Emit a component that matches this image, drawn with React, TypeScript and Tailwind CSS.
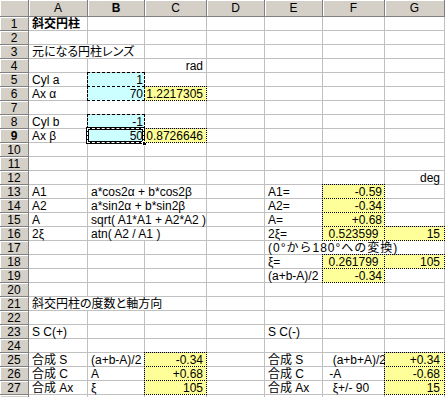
import React from 'react';

type Cell = {
  c: number;
  t: string;
  a?: 'r' | 'c';
  f?: 'y' | 'b';
  s?: number;
  bold?: boolean;
  sel?: boolean;
  wide?: boolean;
};

const COLS = ['A', 'B', 'C', 'D', 'E', 'F', 'G'];

const rows: Record<number, Cell[]> = {
  1: [{ c: 0, t: '斜交円柱', bold: true }],
  3: [{ c: 0, t: '元になる円柱レンズ', s: 2 }],
  4: [{ c: 2, t: 'rad', a: 'r' }],
  5: [{ c: 0, t: 'Cyl a' }, { c: 1, t: '1', a: 'r', f: 'b' }],
  6: [
    { c: 0, t: 'Ax α' },
    { c: 1, t: '70', a: 'r', f: 'b' },
    { c: 2, t: '1.2217305', a: 'r', f: 'y' },
  ],
  8: [{ c: 0, t: 'Cyl b' }, { c: 1, t: '-1', a: 'r', f: 'b' }],
  9: [
    { c: 0, t: 'Ax β' },
    { c: 1, t: '50', a: 'r', f: 'b', sel: true },
    { c: 2, t: '0.8726646', a: 'r', f: 'y' },
  ],
  12: [{ c: 6, t: 'deg', a: 'r' }],
  13: [
    { c: 0, t: 'A1' },
    { c: 1, t: 'a*cos2α + b*cos2β', s: 2 },
    { c: 4, t: 'A1=' },
    { c: 5, t: '-0.59', a: 'r', f: 'y' },
  ],
  14: [
    { c: 0, t: 'A2' },
    { c: 1, t: 'a*sin2α + b*sin2β', s: 2 },
    { c: 4, t: 'A2=' },
    { c: 5, t: '-0.34', a: 'r', f: 'y' },
  ],
  15: [
    { c: 0, t: 'A' },
    { c: 1, t: 'sqrt( A1*A1 + A2*A2 )', s: 2 },
    { c: 4, t: 'A=' },
    { c: 5, t: '+0.68', a: 'r', f: 'y' },
  ],
  16: [
    { c: 0, t: '2ξ' },
    { c: 1, t: 'atn( A2 / A1 )', s: 2 },
    { c: 4, t: '2ξ=' },
    { c: 5, t: '0.523599', a: 'c', f: 'y' },
    { c: 6, t: '15', a: 'r', f: 'y' },
  ],
  17: [{ c: 4, t: '(0°から180°への変換)', s: 3, wide: true }],
  18: [
    { c: 4, t: 'ξ=' },
    { c: 5, t: '0.261799', a: 'c', f: 'y' },
    { c: 6, t: '105', a: 'r', f: 'y' },
  ],
  19: [{ c: 4, t: '(a+b-A)/2' }, { c: 5, t: '-0.34', a: 'r', f: 'y' }],
  21: [{ c: 0, t: '斜交円柱の度数と軸方向', s: 3 }],
  23: [{ c: 0, t: 'S C(+)' }, { c: 4, t: 'S C(-)' }],
  25: [
    { c: 0, t: '合成 S' },
    { c: 1, t: '(a+b-A)/2' },
    { c: 2, t: '-0.34', a: 'r', f: 'y' },
    { c: 4, t: '合成 S' },
    { c: 5, t: '  (a+b+A)/2' },
    { c: 6, t: '+0.34', a: 'r', f: 'y' },
  ],
  26: [
    { c: 0, t: '合成 C' },
    { c: 1, t: 'A' },
    { c: 2, t: '+0.68', a: 'r', f: 'y' },
    { c: 4, t: '合成 C' },
    { c: 5, t: ' -A' },
    { c: 6, t: '-0.68', a: 'r', f: 'y' },
  ],
  27: [
    { c: 0, t: '合成 Ax' },
    { c: 1, t: 'ξ' },
    { c: 2, t: '105', a: 'r', f: 'y' },
    { c: 4, t: '合成 Ax' },
    { c: 5, t: '  ξ+/- 90' },
    { c: 6, t: '15', a: 'r', f: 'y' },
  ],
};

const spanCls: Record<number, string> = { 1: '', 2: 'col-span-2', 3: 'col-span-3' };
const padRight = ['pr-[2px]', 'pr-[1px]', 'pr-[3px]', 'pr-[2px]', 'pr-[2px]', 'pr-[2px]', 'pr-[4px]'];

function DataCell({ cell }: { cell: Cell }) {
  const align =
    cell.a === 'r'
      ? `justify-end ${padRight[cell.c]}`
      : cell.a === 'c'
        ? 'justify-center'
        : 'justify-start pl-[3px]';
  const fill =
    cell.f === 'y'
      ? 'bg-[#ffff99] border-[#ffff99]'
      : cell.f === 'b'
        ? 'bg-[#ccffff] border-[#ccffff]'
        : 'border-[#c0c0c0]';

  return (
    <div
      className={`relative flex items-center whitespace-pre border-r border-b leading-none ${spanCls[cell.s ?? 1]} ${align} ${fill} ${cell.bold ? 'font-bold' : ''} ${cell.wide ? '[font-feature-settings:normal] tracking-[1px]' : ''}`}
    >
      {cell.t}
      {cell.f === 'y' && (
        <div className="absolute -inset-px border border-dotted border-black pointer-events-none" />
      )}
      {cell.f === 'b' && !cell.sel && (
        <div className="absolute -inset-px border border-dashed border-black pointer-events-none" />
      )}
      {cell.sel && (
        <>
          <div className="absolute -left-[2px] -top-[2px] -right-[1px] -bottom-[2px] border-[3px] border-black pointer-events-none">
            <div className="absolute -inset-[2px] border border-dashed border-white" />
          </div>
          <div className="absolute -right-[3px] -bottom-[4px] w-[5px] h-[5px] bg-black border border-white" />
        </>
      )}
    </div>
  );
}

function Header({ children, bold }: { children?: React.ReactNode; bold?: boolean }) {
  return (
    <div
      className={`flex items-center justify-center bg-[#d4d0c8] border-r border-b border-[#808080] shadow-[inset_1px_1px_0_#ffffff] leading-none ${bold ? 'font-bold' : ''}`}
    >
      {children}
    </div>
  );
}

export default function App() {
  const body: React.ReactNode[] = [];

  for (let r = 1; r <= 28; r++) {
    // row 28 only peeks in at the bottom edge, its number is not visible
    body.push(
      <Header key={`h${r}`} bold={r === 9}>
        {r < 28 ? r : null}
      </Header>
    );
    const cells = rows[r] ?? [];
    let c = 0;
    while (c < 7) {
      const cell = cells.find((x) => x.c === c);
      if (cell) {
        body.push(<DataCell key={`${r}-${c}`} cell={cell} />);
        c += cell.s ?? 1;
      } else {
        body.push(<div key={`${r}-${c}`} className="border-r border-b border-[#c0c0c0]" />);
        c += 1;
      }
    }
  }

  return (
    <div className="w-[445px] h-[397px] overflow-hidden bg-white text-black">
      <div className="grid grid-cols-[29px_59px_57px_62px_58px_58px_62px_60px] grid-rows-[17px] auto-rows-[14px] text-[12px] font-['Liberation_Sans','Noto_Sans_CJK_JP',sans-serif] [font-feature-settings:'palt']">
        <Header />
        {COLS.map((col) => (
          <Header key={col} bold={col === 'B'}>
            {col}
          </Header>
        ))}
        {body}
      </div>
    </div>
  );
}
